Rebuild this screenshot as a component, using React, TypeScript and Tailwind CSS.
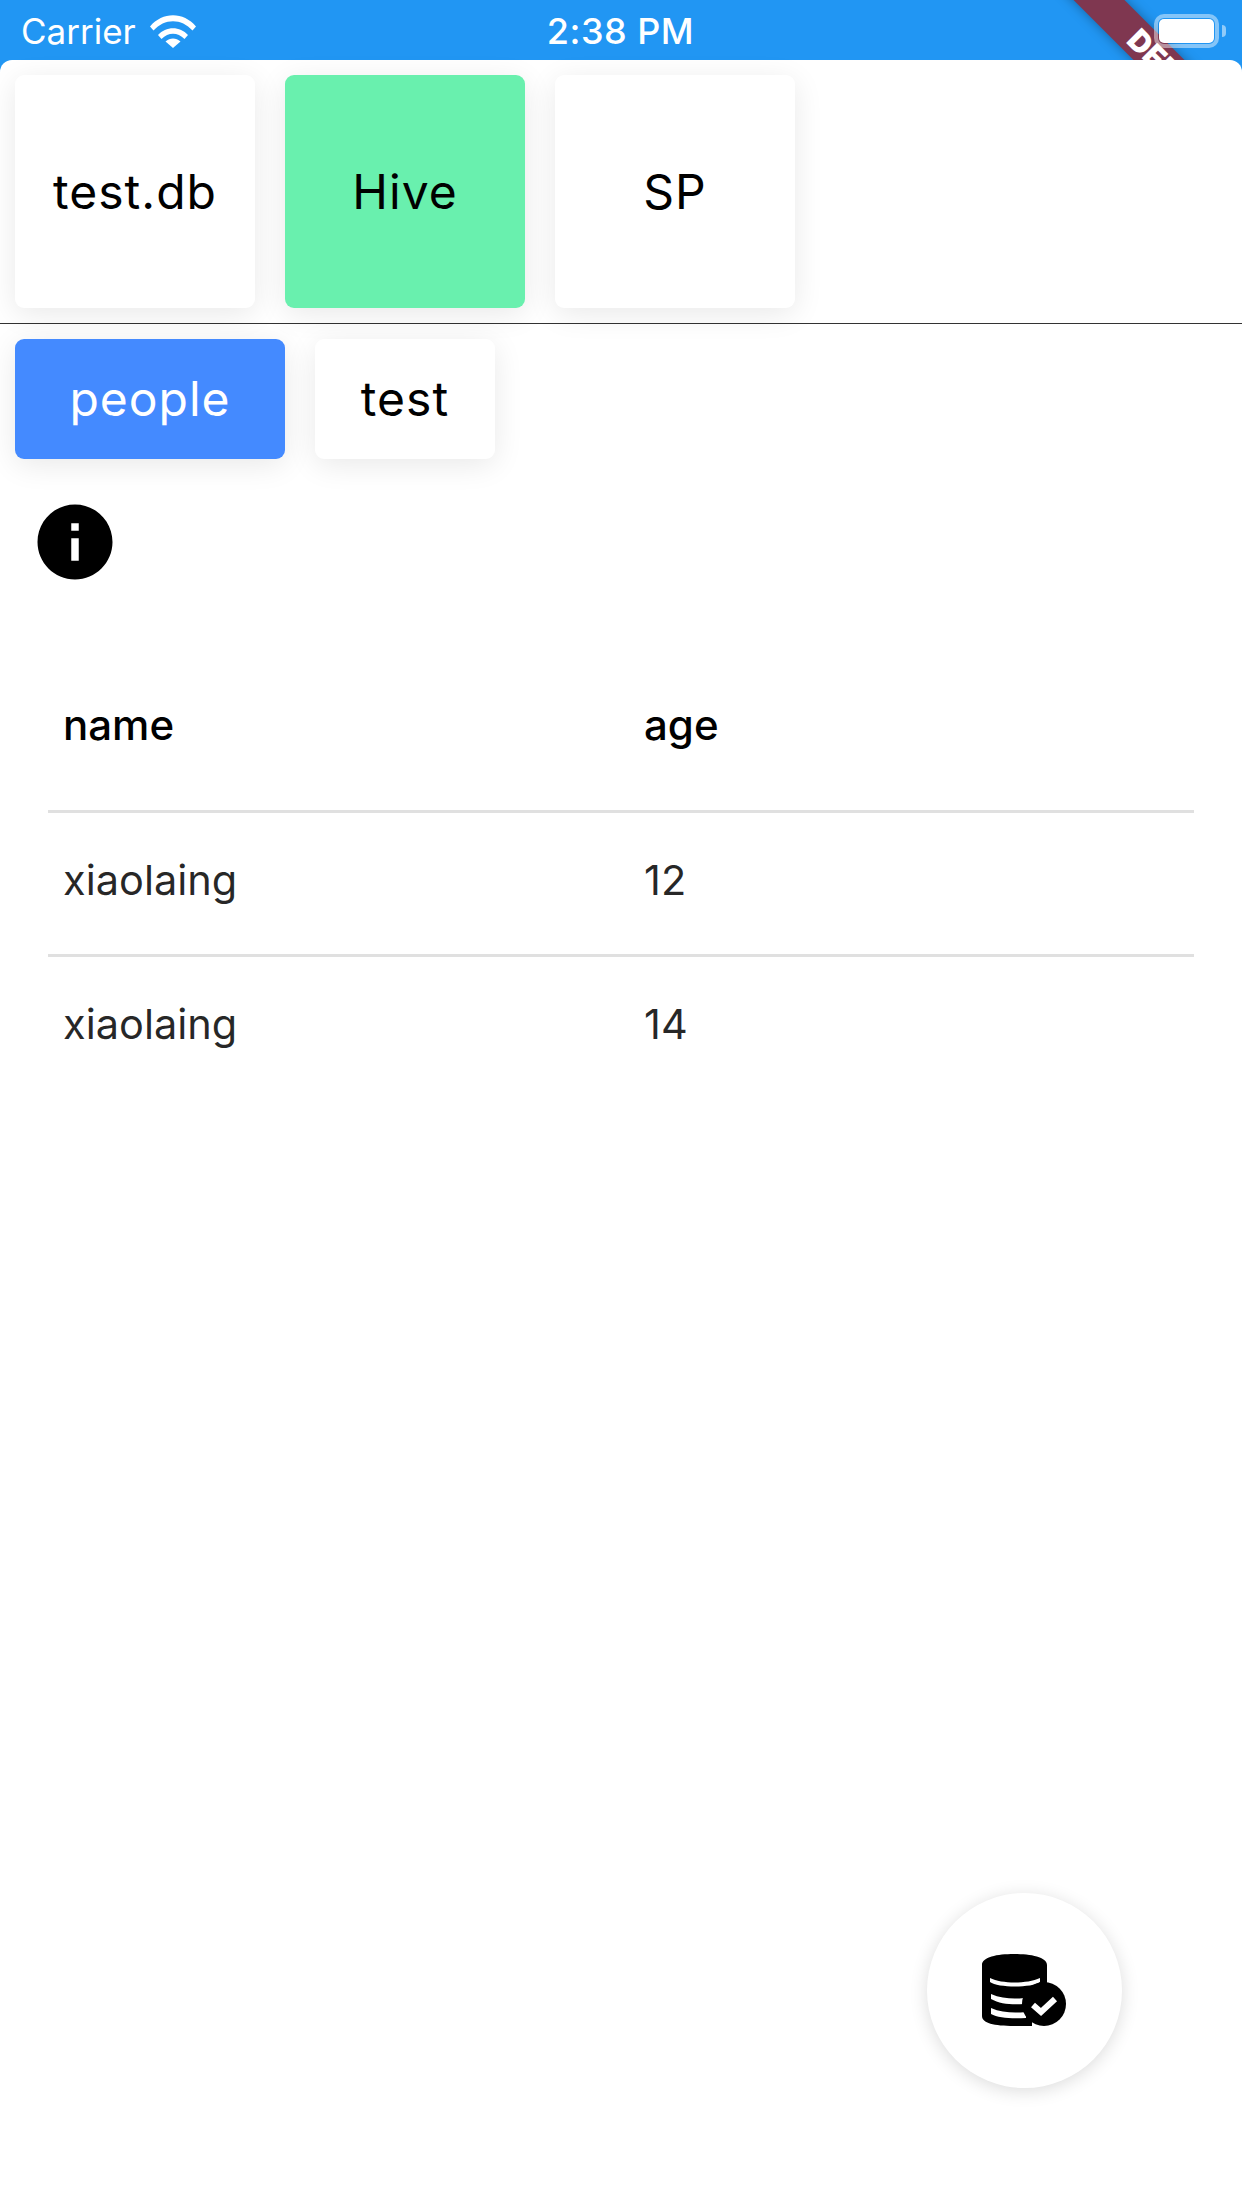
import { MdInfo } from "react-icons/md";

const font = "font-['Inter','Liberation_Sans',sans-serif]";

// wifi glyph for the fake ios status bar
const WifiIcon = () => (
  <svg width="46" height="33" viewBox="0 0 46 33" className="ml-[14px]">
    <path d="M0 11.5C12.5 -3.5 33.5 -3.5 46 11.5L42.5 15.5C31.5 3 14.500 3 3.500 15.500Z" fill="white" />
    <path d="M8 20C16 11 30 11 38 20L34.500 24C27.500 17 18.500 17 11.500 24Z" fill="white" />
    <path d="M15.500 26.500C20 22.500 26 22.500 30.500 26.500L23 33Z" fill="white" />
  </svg>
);

const DbCheckIcon = () => (
  <svg width="85" height="74" viewBox="0 0 85 74" className="blur-[0.6px]">
    <path
      d="M0 11C0 3 15 0 32 0S65 3 65 11V32H50V72H32C12 72 0 69 0 62Z"
      fill="black"
    />
    <path d="M8 24C20 30 45 30 58 24V28C50 34 16 34 8 28Z" fill="white" />
    <path d="M9 40C20 45 33 45 42 44V50C30 51 18 50 9 45Z" fill="white" />
    <path d="M9 54C20 59 33 59 44 58V64C30 65 16 64 9 60Z" fill="white" />
    <circle cx="62" cy="50" r="22" fill="black" />
    <path d="M51 51L59 58L73 45" stroke="white" strokeWidth="6" fill="none" />
  </svg>
);

const StatusBar = () => (
  <div className="relative h-[60px] w-full shrink-0 overflow-hidden text-white">
    <div className="absolute left-[979px] top-[12px] flex h-[36px] w-[300px] rotate-45 items-center justify-center bg-[#7f3750] pl-[116px] text-[30px] font-black text-white shadow-[0_0_12px_rgba(0,0,0,0.35)]">
      DEBUG
    </div>
    <div className="relative flex h-full items-center justify-between pl-[21px] pr-[16px] pt-[2px]">
      <div className="flex w-[300px] items-center text-[35px] leading-none">
        <span>Carrier</span>
        <WifiIcon />
      </div>
      <span className="text-[36px] font-medium leading-none tracking-[0.5px]">2:38 PM</span>
      <div className="flex w-[306px] items-center justify-end gap-[3px]">
        <div className="h-[34px] w-[65px] rounded-[10px] border-[4px] border-white/45 p-[1px]">
          <div className="h-full w-full rounded-[5px] bg-white" />
        </div>
        <div className="h-[12px] w-[4px] rounded-r-full bg-white/50" />
      </div>
    </div>
  </div>
);

const tabs = [
  { label: "test.db", active: false },
  { label: "Hive", active: true },
  { label: "SP", active: false },
];

const rows = [
  { name: "xiaolaing", age: 12 },
  { name: "xiaolaing", age: 14 },
];

export default function App() {
  return (
    <div className={`relative flex h-[2208px] w-[1242px] flex-col overflow-hidden bg-[#2196f3] ${font}`}>
      <StatusBar />
      <div className="relative flex-1 rounded-t-[12px] bg-white text-black">
        <div className="flex gap-[30px] px-[15px] pb-[15px] pt-[15px]">
          {tabs.map((t) => (
            <div
              key={t.label}
              className={`flex h-[233px] w-[240px] items-center justify-center rounded-[9px] text-[48px] tracking-[1px] shadow-[0_6px_30px_rgba(0,0,0,0.09)] ${
                t.active ? "bg-[#69f0ae]" : "bg-white"
              }`}
            >
              {t.label}
            </div>
          ))}
        </div>
        <div className="h-px bg-[#333333]" />
        <div className="flex gap-[30px] px-[15px] pt-[15px]">
          <div className="flex h-[120px] w-[270px] items-center justify-center rounded-[9px] bg-[#448aff] text-[48px] tracking-[1px] text-white shadow-[0_6px_30px_rgba(0,0,0,0.09)]">
            people
          </div>
          <div className="flex h-[120px] w-[180px] items-center justify-center rounded-[9px] bg-white text-[48px] tracking-[1px] shadow-[0_6px_30px_rgba(0,0,0,0.09)]">
            test
          </div>
        </div>
        <div className="pl-[30px] pt-[38px]">
          <MdInfo size={90} color="black" />
        </div>
        <div className="ml-[48px] mt-[57px] w-[1146px]">
          <div className="grid h-[169px] grid-cols-[581px_1fr] items-center border-b-[3px] border-[#e0e0e0] pb-[4px] pl-[15px] text-[42px] font-medium leading-none">
            <span>name</span>
            <span>age</span>
          </div>
          {rows.map((r, i) => (
            <div
              key={i}
              className={`grid h-[144px] grid-cols-[581px_1fr] items-center pl-[15px] text-[41.5px] leading-none text-black/85 ${
                i === 0 ? "border-b-[3px] border-[#e0e0e0] pb-[6px]" : "pb-[9px]"
              }`}
            >
              <span>{r.name}</span>
              <span>{r.age}</span>
            </div>
          ))}
        </div>
        <div className="absolute left-[927px] top-[1833px] flex h-[195px] w-[195px] items-center justify-center rounded-full bg-white shadow-[0_3px_18px_rgba(0,0,0,0.14)]">
          <DbCheckIcon />
        </div>
      </div>
    </div>
  );
}
